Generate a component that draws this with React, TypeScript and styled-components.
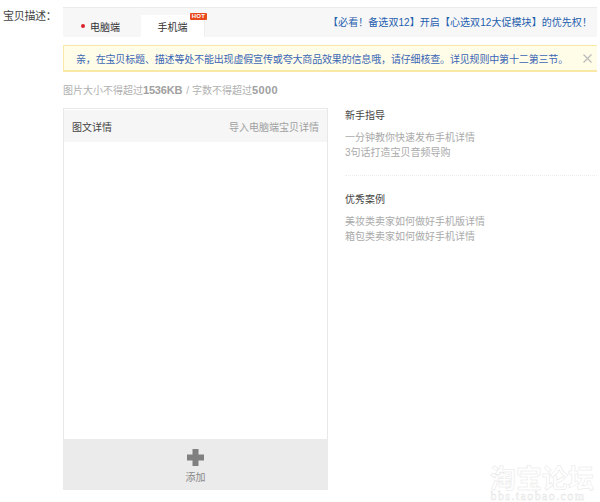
import { createGlobalStyle } from "styled-components";
import styled from "styled-components";

const Global = createGlobalStyle`
  html, body {
    margin: 0;
    padding: 0;
    background: #fff;
  }
  body {
    font-family: "Liberation Sans", "Noto Sans CJK SC", sans-serif;
    font-size: 10px;
    color: #666;
  }
`;

/* Page */

const Page = styled.div`
  width: 600px;
  height: 502px;
  position: relative;
  overflow: hidden;
  display: grid;
  grid-template-columns: 63px 534px;
  padding-top: 7px;
  box-sizing: border-box;
`;

const FieldLabel = styled.div`
  padding: 3px 0 0 3px;
  font-size: 11px;
  line-height: 12px;
  letter-spacing: -0.3px;
  color: #444;
  white-space: nowrap;
`;

const Main = styled.div`
  display: flex;
  flex-direction: column;
`;

/* Tabs */

const TabBar = styled.div`
  height: 30px;
  box-sizing: border-box;
  background: #f7f7f7;
  border-top: 1px solid #ebebeb;
  display: flex;
  align-items: flex-end;
`;

const Tab = styled.div<{ $active?: boolean }>`
  position: relative;
  width: ${(p) => (p.$active ? "63px" : "78px")};
  height: 22px;
  display: flex;
  align-items: center;
  justify-content: center;
  gap: 5px;
  padding-right: ${(p) => (p.$active ? "0" : "3px")};
  box-sizing: border-box;
  font-size: 10px;
  color: #333;
  background: ${(p) => (p.$active ? "#fff" : "transparent")};
  box-shadow: ${(p) => (p.$active ? "1px 0 0 #eee" : "none")};
`;

const Star = styled.i`
  width: 4px;
  height: 4px;
  background: #d8232a;
  border-radius: 50%;
`;

const HotBadge = styled.span`
  position: absolute;
  top: -2px;
  right: -3px;
  width: 17px;
  height: 7px;
  background: #e8491d;
  color: #fff;
  font-size: 6px;
  font-weight: 700;
  line-height: 7px;
  text-align: center;
  letter-spacing: 0.3px;
  border-radius: 1px;
`;

const Promo = styled.a`
  margin-left: auto;
  padding-right: 5px;
  align-self: center;
  font-size: 10px;
  line-height: 12px;
  letter-spacing: 0.06px;
  color: #1f5fae;
  white-space: nowrap;
`;

/* Notice */

const Notice = styled.div`
  margin-top: 8px;
  height: 27px;
  box-sizing: border-box;
  background: #fffce8;
  border: 1px solid #fae8a6;
  border-width: 1px 0 2px 1px;
  padding-left: 12px;
  display: flex;
  align-items: center;
  font-size: 10px;
  letter-spacing: -0.16px;
  color: #3a66b5;
  white-space: nowrap;
`;

const CloseIcon = styled.svg`
  margin-left: auto;
  margin-right: 5px;
  width: 9px;
  height: 9px;
  flex: none;
`;

const Limits = styled.div`
  margin-top: 12px;
  height: 13px;
  font-size: 10px;
  line-height: 13px;
  color: #b0b0b0;
  white-space: nowrap;
`;

const LimitValue = styled.b<{ $spacing: string }>`
  font-size: 11px;
  letter-spacing: ${(p) => p.$spacing};
  color: #a0a0a0;
`;

const Slash = styled.span`
  margin: 0 3px 0 4px;
`;

/* Editor and side notes */

const Columns = styled.div`
  margin-top: 11px;
  display: flex;
  gap: 17px;
`;

const Editor = styled.div`
  width: 265px;
  height: 382px;
  box-sizing: border-box;
  border: 1px solid #e8e8e8;
  border-bottom: 0;
  padding-top: 1px;
  display: flex;
  flex-direction: column;
`;

const EditorHead = styled.div`
  height: 32px;
  background: #f6f6f6;
  display: flex;
  align-items: center;
  justify-content: space-between;
  padding: 0 8px;
  font-size: 10px;
  color: #444;
  span + span {
    color: #a0a0a0;
  }
`;

const EditorBody = styled.div`
  flex: 1;
`;

const AddBar = styled.div`
  margin: 0 -1px;
  height: 51px;
  background: #ebebeb;
  display: flex;
  flex-direction: column;
  align-items: center;
  padding-top: 10px;
  box-sizing: border-box;
  gap: 6px;
  font-size: 10px;
  line-height: 12px;
  color: #888;
`;

const PlusIcon = styled.svg`
  width: 17px;
  height: 17px;
`;

const Side = styled.div`
  width: 252px;
  display: flex;
  flex-direction: column;
`;

const SideBlock = styled.div`
  padding: 2px 0 0;
  & + & {
    margin-top: 15px;
    padding-top: 18px;
    border-top: 1px dotted #ececec;
  }
`;

const SideTitle = styled.h4`
  margin: 0 0 8px;
  font-size: 10px;
  line-height: 12px;
  font-weight: 400;
  color: #444;
`;

const SideLink = styled.div`
  font-size: 10px;
  line-height: 15px;
  color: #aaa;
`;

/* Watermark */

const Watermark = styled.div`
  position: absolute;
  right: 3px;
  top: 464px;
  width: 110px;
  text-align: center;
  color: #fff;
  -webkit-text-stroke: 0.5px #e6e6e6;
`;

const WatermarkTitle = styled.div`
  font-size: 26px;
  line-height: 26px;
  white-space: nowrap;
  font-family: "Noto Sans CJK SC", sans-serif;
  font-weight: 700;
`;

const WatermarkUrl = styled.div`
  padding-right: 8px;
  font-size: 12px;
  line-height: 12px;
  font-family: "Liberation Serif", serif;
  letter-spacing: 1.4px;
`;

export default function App() {
  return (
    <Page>
      <Global />
      <FieldLabel>宝贝描述：</FieldLabel>
      <Main>
        <TabBar>
          <Tab>
            <Star />
            电脑端
          </Tab>
          <Tab $active>
            手机端
            <HotBadge>HOT</HotBadge>
          </Tab>
          <Promo>【必看！备选双12】开启【心选双12大促模块】的优先权！</Promo>
        </TabBar>

        <Notice>
          亲，在宝贝标题、描述等处不能出现虚假宣传或夸大商品效果的信息哦，请仔细核查。详见规则中第十二第三节。
          <CloseIcon viewBox="0 0 9 9">
            <path d="M0.5 0.5 L8.5 8.5 M8.5 0.5 L0.5 8.5" stroke="#bbb" strokeWidth="1.2" fill="none" />
          </CloseIcon>
        </Notice>

        <Limits>
          图片大小不得超过<LimitValue $spacing="-0.2px">1536KB</LimitValue>
          <Slash>/</Slash>字数不得超过<LimitValue $spacing="0.4px">5000</LimitValue>
        </Limits>

        <Columns>
          <Editor>
            <EditorHead>
              <span>图文详情</span>
              <span>导入电脑端宝贝详情</span>
            </EditorHead>
            <EditorBody />
            <AddBar>
              <PlusIcon viewBox="0 0 17 17">
                <path d="M5.5 0 H11.5 V5.5 H17 V11.5 H11.5 V17 H5.5 V11.5 H0 V5.5 H5.5 Z" fill="#808080" />
              </PlusIcon>
              添加
            </AddBar>
          </Editor>

          <Side>
            <SideBlock>
              <SideTitle>新手指导</SideTitle>
              <SideLink>一分钟教你快速发布手机详情</SideLink>
              <SideLink>3句话打造宝贝音频导购</SideLink>
            </SideBlock>
            <SideBlock>
              <SideTitle>优秀案例</SideTitle>
              <SideLink>美妆类卖家如何做好手机版详情</SideLink>
              <SideLink>箱包类卖家如何做好手机详情</SideLink>
            </SideBlock>
          </Side>
        </Columns>
      </Main>
      <Watermark>
        <WatermarkTitle>淘宝论坛</WatermarkTitle>
        <WatermarkUrl>bbs.taobao.com</WatermarkUrl>
      </Watermark>
    </Page>
  );
}
